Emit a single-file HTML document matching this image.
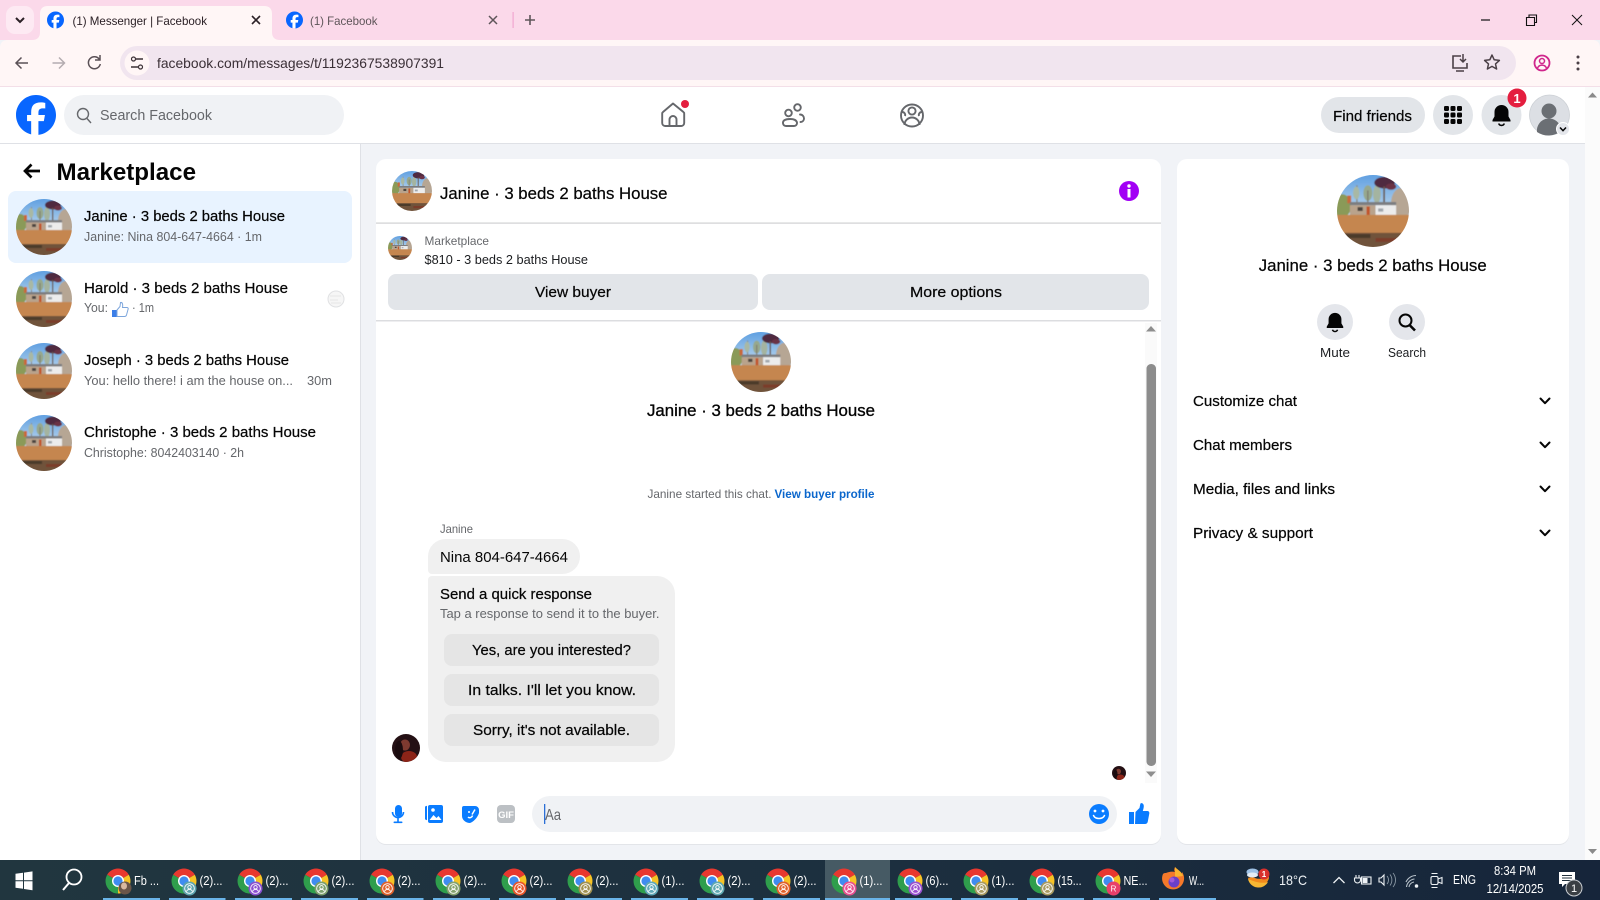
<!DOCTYPE html>
<html lang="en"><head><meta charset="utf-8"><title>Messenger | Facebook</title>
<style>
html,body{margin:0;padding:0;width:1600px;height:900px;overflow:hidden;background:#f1f3f7}
svg{display:block}
text{font-family:"Liberation Sans",sans-serif;fill:#050505;font-size:15px}
.m{stroke:#050505;stroke-width:.22}
.g{fill:#65676b}
.c{font-size:12px}
.s{font-size:13px}
.w{fill:#fff;font-size:13px}
.wt{fill:#eef2f5;font-size:13px}
</style></head><body>
<svg width="1600" height="900" viewBox="0 0 1600 900" xmlns="http://www.w3.org/2000/svg">
<defs>
<linearGradient id="tb" x1="0" x2="1" y1="0" y2="0"><stop offset="0" stop-color="#21363f"/><stop offset=".55" stop-color="#1c2f3f"/><stop offset="1" stop-color="#16253a"/></linearGradient>
<linearGradient id="sky" x1="0" x2="0" y1="0" y2="1"><stop offset="0" stop-color="#5a9ce0"/><stop offset="1" stop-color="#c4dcee"/></linearGradient>
<filter id="bl" x="-5%" y="-5%" width="110%" height="110%"><feGaussianBlur stdDeviation=".45"/></filter>
<clipPath id="cp"><circle cx="28" cy="28" r="28"/></clipPath>
<symbol id="house" viewBox="0 0 56 56"><g clip-path="url(#cp)"><g filter="url(#bl)">
<rect x="-2" y="-2" width="60" height="34" fill="url(#sky)"/>
<ellipse cx="4" cy="24" rx="7" ry="9" fill="#8a9a58"/><rect x="8" y="16" width="3" height="6" fill="#c8683a"/>
<rect x="15" y="8" width="1" height="14" fill="#8a8478"/><ellipse cx="15" cy="14" rx="2.500" ry="5" fill="#a8b8a4"/>
<ellipse cx="24" cy="14" rx="3.500" ry="6" fill="#96a88e"/><rect x="23.500" y="12" width="1" height="10" fill="#7d786c"/>
<ellipse cx="31" cy="15" rx="3" ry="7" fill="#a4b4a0"/>
<ellipse cx="37" cy="6" rx="8" ry="4.500" fill="#4f2c3f"/><ellipse cx="42" cy="9" rx="4" ry="2.500" fill="#6a3044"/><rect x="36" y="9" width="1.300" height="13" fill="#6a5a50"/>
<ellipse cx="50" cy="22" rx="8" ry="12" fill="#b6a694"/>
<rect x="10" y="21" width="36" height="2.500" fill="#7c7d80"/><rect x="10" y="23.500" width="20" height="8" fill="#b9a38c"/><rect x="30" y="23.500" width="16" height="8" fill="#ececec"/>
<rect x="16" y="25" width="4" height="3" fill="#4c4440"/><rect x="23" y="24.500" width="2.500" height="7" fill="#c2542a"/><rect x="32" y="26" width="4" height="2.500" fill="#a0a6ac"/>
<rect x="-2" y="31" width="60" height="15" fill="#c58650"/>
<rect x="-2" y="45" width="60" height="13" fill="#70533a"/><rect x="6" y="46" width="20" height="3" fill="#4b3a2c"/><rect x="30" y="49" width="20" height="3" fill="#7c3d2c"/>
</g></g></symbol>
<symbol id="fb" viewBox="0 0 36 36"><circle cx="18" cy="18" r="17" fill="#fff"/><path fill="#0866ff" d="M36 18C36 8.06 27.94 0 18 0S0 8.06 0 18c0 8.44 5.81 15.52 13.65 17.47V23.5H9.94V18h3.71v-2.37c0-6.13 2.77-8.96 8.79-8.96 1.14 0 3.11.22 3.91.45v4.98c-.42-.04-1.16-.07-2.07-.07-2.96 0-4.1 1.12-4.1 4.03V18h5.88l-1.01 5.5H20.18v12.37C29.1 34.79 36 27.2 36 18z"/></symbol>
<symbol id="bell" viewBox="0 0 24 24"><path fill="#050505" d="M12 2a7 7 0 0 0-7 7v4.500L3 17v1.500h18V17l-2-3.500V9a7 7 0 0 0-7-7z"/><path fill="none" stroke="#050505" stroke-width="1.600" d="M9.200 20.500a3 3 0 0 0 5.600 0"/></symbol>
<g id="cr"><path fill="#e8382f" d="M0 0L-10.800-6.250A12.500 12.500 0 0 1 10.800-6.250Z"/><path fill="#f7c325" d="M0 0L10.800-6.250A12.500 12.500 0 0 1 0 12.500Z"/><path fill="#2f9e4c" d="M0 0L0 12.500A12.500 12.500 0 0 1-10.800-6.250Z"/><circle r="6" fill="#fff"/><circle r="4.600" fill="#3f8cf0"/></g>
<g id="pp" fill="none" stroke="#fff" stroke-width=".9"><circle r="4.800"/><circle cy="-1.200" r="1.700"/><path d="M-3 3a3.200 3.200 0 0 1 6 0"/></g>
<g id="dn"><path d="M-4.500-2.500L0 2.200 4.500-2.500" fill="none" stroke="#050505" stroke-width="2" stroke-linecap="round" stroke-linejoin="round"/></g>
<clipPath id="wc"><circle cx="0" cy="0" r="14"/></clipPath>
<g id="wom"><circle r="14" fill="#241014"/><g clip-path="url(#wc)"><ellipse cx="-1" cy="-3" rx="5" ry="5.500" fill="#7d3a30"/><ellipse cx="3" cy="9" rx="8" ry="6" fill="#8c2418"/><ellipse cx="-7" cy="2" rx="4" ry="9" fill="#1a0b0e"/></g></g>
</defs>

<!-- browser chrome -->
<rect width="1600" height="40" fill="#fbd9ea"/>
<rect x="6" y="6" width="28" height="28" rx="9" fill="#fdeaf3"/>
<path d="M16 18l4 4 4-4" fill="none" stroke="#2b2026" stroke-width="2"/>
<path d="M32 40q8 0 8-8V14q0-8 8-8h216q8 0 8 8v18q0 8 8 8z" fill="#fff6f6"/>
<use href="#fb" x="47" y="11.500" width="17" height="17"/>
<text x="72.500" y="25" class="c" textLength="134.500" lengthAdjust="spacingAndGlyphs" style="fill:#2b2026">(1) Messenger | Facebook</text>
<path d="M252 16l8 8m0-8l-8 8" stroke="#2b2026" stroke-width="1.600"/>
<use href="#fb" x="286" y="11.500" width="17" height="17"/>
<text x="310" y="25" class="c g" textLength="67.500" lengthAdjust="spacingAndGlyphs" style="fill:#5e5559">(1) Facebook</text>
<path d="M489 16l8 8m0-8l-8 8" stroke="#5e5559" stroke-width="1.500"/>
<rect x="512.500" y="12" width="1.200" height="16" fill="#f2a6d0"/>
<path d="M530 15v10m-5-5h10" stroke="#5e5559" stroke-width="1.600"/>
<path d="M1481 20h9" stroke="#111" stroke-width="1.200"/>
<path d="M1526.500 17.500h8v8h-8z M1529 17.500v-2.500h7.500v7.500h-2" fill="none" stroke="#111" stroke-width="1.100"/>
<path d="M1572 15l10 10m0-10l-10 10" stroke="#111" stroke-width="1"/>
<path d="M0 87V48q0-8 8-8h1584q8 0 8 8v39z" fill="#fff6f6"/>
<rect y="86" width="1600" height="1.500" fill="#f3dfe8"/>
<path d="M28 63H16.500m5-5.500l-5.500 5.500 5.500 5.500" fill="none" stroke="#5a5056" stroke-width="1.500"/>
<path d="M52.500 63H64m-5-5.500l5.500 5.500-5.500 5.500" fill="none" stroke="#b4acb0" stroke-width="1.500"/>
<path d="M99.500 59.500a6 6 0 1 0 .8 4.500M100 55v5h-5" fill="none" stroke="#5a5056" stroke-width="1.500"/>
<rect x="120" y="46" width="1396" height="34" rx="17" fill="#f1e5ef"/>
<circle cx="137" cy="63" r="12.500" fill="#fff6f6"/>
<path d="M136 59h7M131 67h7" stroke="#3a3035" stroke-width="1.400"/><circle cx="133.500" cy="59" r="2" fill="none" stroke="#3a3035" stroke-width="1.200"/><circle cx="140.500" cy="67" r="2" fill="none" stroke="#3a3035" stroke-width="1.200"/>
<text x="157" y="68" textLength="287" lengthAdjust="spacingAndGlyphs" style="font-size:14px;fill:#3a2f36">facebook.com/messages/t/1192367538907391</text>
<path d="M1461 56h-8v12h14v-5M1456 71h8" fill="none" stroke="#4a3f46" stroke-width="1.600"/><path d="M1463 54v8m-3-3l3 3 3-3" fill="none" stroke="#4a3f46" stroke-width="1.500"/>
<path d="M1492 55l2.200 4.800 5.200.6-3.900 3.500 1.100 5.100-4.600-2.600-4.600 2.600 1.100-5.100-3.900-3.500 5.200-.6z" fill="none" stroke="#4a3f46" stroke-width="1.500" stroke-linejoin="round"/>
<circle cx="1542" cy="63" r="7.500" fill="none" stroke="#d0268c" stroke-width="1.800"/><circle cx="1542" cy="61" r="2.500" fill="none" stroke="#d0268c" stroke-width="1.500"/><path d="M1537.500 68a5 5 0 0 1 9 0" fill="none" stroke="#d0268c" stroke-width="1.500"/>
<circle cx="1578" cy="57" r="1.500" fill="#4a3f46"/><circle cx="1578" cy="63" r="1.500" fill="#4a3f46"/><circle cx="1578" cy="69" r="1.500" fill="#4a3f46"/>

<!-- page bg / scrollbar -->
<rect y="87" width="1600" height="773" fill="#f1f3f7"/>
<rect x="1585" y="87" width="15" height="773" fill="#fbfbfb"/>
<path d="M1592.500 92.500l4.500 5h-9z" fill="#8a8a8a"/><path d="M1592.500 854l4.500-5h-9z" fill="#8a8a8a"/>

<!-- fb header -->
<rect y="87" width="1585" height="56" fill="#fff"/>
<rect y="143" width="1585" height="1" fill="#dfe1e6"/>
<use href="#fb" x="16" y="95" width="40" height="40"/>
<rect x="64" y="95" width="280" height="40" rx="20" fill="#f0f2f5"/>
<circle cx="83" cy="114" r="5.500" fill="none" stroke="#65676b" stroke-width="1.400"/><path d="M87 118.500l4 4.500" stroke="#65676b" stroke-width="1.400"/>
<text x="100" y="120" class="g" textLength="112" lengthAdjust="spacingAndGlyphs">Search Facebook</text>
<path d="M673 103.500L663 112a2 2 0 0 0-.8 1.600v9.400a3 3 0 0 0 3 3h16a3 3 0 0 0 3-3v-9.400a2 2 0 0 0-.8-1.600zM669.500 126v-6.500a3.500 3.500 0 0 1 7 0v6.500" fill="none" stroke="#65676b" stroke-width="1.900" stroke-linejoin="round"/>
<circle cx="685" cy="104" r="4" fill="#e41e3f"/>
<g fill="none" stroke="#65676b" stroke-width="1.900" stroke-linecap="round"><circle cx="788.500" cy="113" r="3.300"/><circle cx="797.500" cy="107.500" r="3.300"/><path d="M786 126h8a3 3 0 0 0 3-3.500c-.5-2-2.500-3.500-7-3.500s-7 1.500-7 3.500a3 3 0 0 0 3 3.500zM800 114.500c2.500 0 4 2 4 4s-1.500 3.500-3.500 3.500"/></g>
<g fill="none" stroke="#65676b" stroke-width="1.900"><circle cx="912" cy="115.500" r="11"/><circle cx="912" cy="111" r="3.600"/><path d="M904.500 125a7.500 7.500 0 0 1 15 0M902 112a3 3 0 0 1 3 4M922 112a3 3 0 0 0-3 4"/></g>
<rect x="1321" y="97" width="104" height="36" rx="18" fill="#e2e5e9"/>
<text x="1333" y="121" class="m" textLength="79" lengthAdjust="spacingAndGlyphs">Find friends</text>
<circle cx="1453" cy="115" r="20" fill="#e2e5e9"/>
<g fill="#050505"><rect x="1444" y="106" width="5" height="5" rx="1.200"/><rect x="1450.500" y="106" width="5" height="5" rx="1.200"/><rect x="1457" y="106" width="5" height="5" rx="1.200"/><rect x="1444" y="112.500" width="5" height="5" rx="1.200"/><rect x="1450.500" y="112.500" width="5" height="5" rx="1.200"/><rect x="1457" y="112.500" width="5" height="5" rx="1.200"/><rect x="1444" y="119" width="5" height="5" rx="1.200"/><rect x="1450.500" y="119" width="5" height="5" rx="1.200"/><rect x="1457" y="119" width="5" height="5" rx="1.200"/></g>
<circle cx="1501.500" cy="115" r="20" fill="#e2e5e9"/>
<use href="#bell" x="1489.500" y="103" width="24" height="24"/>
<circle cx="1517" cy="98" r="9.500" fill="#e41e3f"/><text x="1517" y="103" text-anchor="middle" style="font-size:13px;font-weight:bold;fill:#fff">1</text>
<circle cx="1549.500" cy="115" r="20" fill="#dcdfe4" stroke="#ccd0d5" stroke-width=".8"/>
<circle cx="1549" cy="111" r="7.500" fill="#6b6f74"/><path d="M1537 132a12 12 0 0 1 24-3v2a20 20 0 0 1-24 1z" fill="#6b6f74"/>
<circle cx="1563" cy="129" r="6.500" fill="#e4e6eb" stroke="#fff"/><path d="M1560 127.500l3 3.200 3-3.200" fill="none" stroke="#050505" stroke-width="1.500"/>

<!-- sidebar -->
<rect y="144" width="360" height="716" fill="#fff"/>
<rect x="360" y="144" width="1" height="716" fill="#dfe1e6"/>
<path d="M40 171H25m6.500-6.500L25 171l6.500 6.500" fill="none" stroke="#050505" stroke-width="2.700"/>
<text x="56.500" y="180" textLength="139.500" lengthAdjust="spacingAndGlyphs" style="font-size:24px;font-weight:bold">Marketplace</text>
<rect x="8" y="191" width="344" height="72" rx="8" fill="#e8f3ff"/>
<use href="#house" x="16" y="199" width="56" height="56"/>
<text x="84" y="221" class="m" textLength="201" lengthAdjust="spacingAndGlyphs">Janine · 3 beds 2 baths House</text>
<text x="84" y="241" class="s g" textLength="178" lengthAdjust="spacingAndGlyphs">Janine: Nina 804-647-4664 · 1m</text>
<use href="#house" x="16" y="271" width="56" height="56"/>
<text x="84" y="293" class="m" textLength="204" lengthAdjust="spacingAndGlyphs">Harold · 3 beds 2 baths House</text>
<text x="84" y="312" class="s g" textLength="24" lengthAdjust="spacingAndGlyphs">You:</text>
<path d="M112 310h5v7h-5z" fill="#3c7fe8"/><path d="M117 310l3-3.500 .5-4c2-.5 2.500 2 2 5h4.500c1 0 1.500 1 1 2l-1.500 5.500c-.3 1-1 1.500-2 1.500h-7.500z" fill="#fff" stroke="#7da6dc" stroke-width="1"/>
<text x="132" y="312" class="s g" textLength="22" lengthAdjust="spacingAndGlyphs">· 1m</text>
<circle cx="336" cy="299" r="8" fill="#f6f6f6" stroke="#e0e1e3"/><path d="M330 296h11M330 300h8M331 303h10" stroke="#dfe0e2" stroke-width=".8"/>
<use href="#house" x="16" y="343" width="56" height="56"/>
<text x="84" y="365" class="m" textLength="205" lengthAdjust="spacingAndGlyphs">Joseph · 3 beds 2 baths House</text>
<text x="84" y="385" class="s g" textLength="209" lengthAdjust="spacingAndGlyphs">You: hello there! i am the house on...</text>
<text x="307" y="385" class="s g" textLength="25" lengthAdjust="spacingAndGlyphs">30m</text>
<use href="#house" x="16" y="415" width="56" height="56"/>
<text x="84" y="437" class="m" textLength="232" lengthAdjust="spacingAndGlyphs">Christophe · 3 beds 2 baths House</text>
<text x="84" y="457" class="s g" textLength="160" lengthAdjust="spacingAndGlyphs">Christophe: 8042403140 · 2h</text>

<!-- chat card -->
<rect x="376" y="160" width="785" height="685" rx="10" fill="#e3e5e9"/>
<rect x="376" y="159" width="785" height="685" rx="10" fill="#fff"/>
<use href="#house" x="392" y="171" width="40" height="40"/>
<text x="440" y="199" class="m" textLength="227.500" lengthAdjust="spacingAndGlyphs" style="font-size:17px">Janine · 3 beds 2 baths House</text>
<circle cx="1129" cy="191" r="10" fill="#a200f5"/><circle cx="1129" cy="186" r="1.700" fill="#fff"/><rect x="1127.500" y="189" width="3" height="8.500" fill="#fff"/>
<rect x="376" y="222.500" width="785" height="1.200" fill="#cfd0d2"/>
<use href="#house" x="388" y="236" width="24" height="24"/>
<text x="424.500" y="245" class="c g" textLength="64.500" lengthAdjust="spacingAndGlyphs">Marketplace</text>
<text x="424.500" y="264" class="s" textLength="163.500" lengthAdjust="spacingAndGlyphs" style="fill:#1c1e21">$810 - 3 beds 2 baths House</text>
<rect x="388" y="274" width="370" height="36" rx="8" fill="#e2e5e9"/>
<text x="535" y="297" class="m" textLength="76" lengthAdjust="spacingAndGlyphs">View buyer</text>
<rect x="762" y="274" width="387" height="36" rx="8" fill="#e2e5e9"/>
<text x="910" y="297" class="m" textLength="92" lengthAdjust="spacingAndGlyphs">More options</text>
<rect x="376" y="320" width="785" height="1.500" fill="#dcdde0"/>
<rect x="1145" y="323" width="12" height="460" fill="#fafafa"/>
<path d="M1151 326l5 5.500h-10z" fill="#8e8e8e"/><path d="M1151 777l5-5.500h-10z" fill="#8e8e8e"/>
<rect x="1146.500" y="364" width="9.500" height="402" rx="4.500" fill="#8c8c8c"/>
<use href="#house" x="731" y="332" width="60" height="60"/>
<text x="647" y="416" class="m" textLength="228" lengthAdjust="spacingAndGlyphs" style="font-size:17px;stroke-width:.35">Janine · 3 beds 2 baths House</text>
<text x="647.500" y="498" class="c g" textLength="124" lengthAdjust="spacingAndGlyphs">Janine started this chat.</text>
<text x="774.500" y="498" textLength="100" lengthAdjust="spacingAndGlyphs" style="font-size:12px;font-weight:bold;fill:#0a66cc">View buyer profile</text>
<text x="440" y="533" class="c g" textLength="33" lengthAdjust="spacingAndGlyphs">Janine</text>
<path d="M432 574a4 4 0 0 1-4-4V556.500A17.500 17.500 0 0 1 445.500 539H562.500a17.500 17.500 0 0 1 0 35z" fill="#f0f0f0"/>
<text x="440" y="562" textLength="128" lengthAdjust="spacingAndGlyphs">Nina 804-647-4664</text>
<path d="M432 576H657a18 18 0 0 1 18 18V744a18 18 0 0 1-18 18H446a18 18 0 0 1-18-18V580a4 4 0 0 1 4-4z" fill="#f0f0f0"/>
<text x="440" y="599" class="m" textLength="152" lengthAdjust="spacingAndGlyphs">Send a quick response</text>
<text x="440" y="618" class="s g" textLength="219.500" lengthAdjust="spacingAndGlyphs">Tap a response to send it to the buyer.</text>
<rect x="444" y="634" width="215" height="32" rx="8" fill="#e5e5e5"/>
<text x="472" y="655" class="m" textLength="159" lengthAdjust="spacingAndGlyphs">Yes, are you interested?</text>
<rect x="444" y="674" width="215" height="32" rx="8" fill="#e5e5e5"/>
<text x="468" y="695" class="m" textLength="168" lengthAdjust="spacingAndGlyphs">In talks. I'll let you know.</text>
<rect x="444" y="714" width="215" height="32" rx="8" fill="#e5e5e5"/>
<text x="473" y="735" class="m" textLength="157" lengthAdjust="spacingAndGlyphs">Sorry, it's not available.</text>
<use href="#wom" x="406" y="748"/>
<g transform="translate(1119,773) scale(.5)"><use href="#wom"/></g>
<!-- composer -->
<g fill="#0a7cff"><rect x="395" y="805" width="7" height="12" rx="3.500"/><path d="M392.500 812a5.500 5.500 0 0 0 11 0" fill="none" stroke="#0a7cff" stroke-width="1.600"/><rect x="397.200" y="818" width="1.600" height="4"/><rect x="393.500" y="821.500" width="9" height="1.600" rx=".8"/>
<path d="M425 806.500l2-.8v14.500l-2-.8z"/><rect x="428" y="805" width="15" height="18" rx="2"/></g>
<circle cx="433" cy="810" r="1.800" fill="#fff"/><path d="M429.500 820l4-5 3 3 2-2 3 4z" fill="#fff"/>
<path d="M464 806h11a4 4 0 0 1 4 4v3c-1.500 5-6 9-9 10-4 0-8-3-8-7v-8a2 2 0 0 1 2-2z" fill="#0a7cff"/><path d="M469 811v2M475 809.500l-3 5M468 817c1.500 1.500 4 .5 4.500-1.500" stroke="#fff" stroke-width="1.500" fill="none"/>
<rect x="497" y="805" width="18" height="18" rx="4" fill="#bcc0c4"/><text x="506" y="818" text-anchor="middle" style="font-size:9.500px;font-weight:bold;fill:#fff">GIF</text>
<rect x="532" y="796" width="585" height="36" rx="18" fill="#f0f2f5"/>
<rect x="544" y="804" width="1.300" height="20" fill="#2b6fd6"/>
<text x="545" y="820" class="g" textLength="16" lengthAdjust="spacingAndGlyphs" style="font-size:16px">Aa</text>
<circle cx="1099" cy="814" r="10" fill="#0a7cff"/><circle cx="1095" cy="811" r="1.400" fill="#fff"/><circle cx="1103" cy="811" r="1.400" fill="#fff"/><path d="M1093.500 815.500c2 4 9 4 11 0" fill="none" stroke="#fff" stroke-width="1.500" stroke-linecap="round"/>
<path d="M1129 812h5v12h-5zM1135.500 812l4-4 .8-4c.3-1.500 3.500-1 3.500 2 0 1.800-.6 3.500-1 5h4.500c1.600 0 2.200 1.200 2 2.500l-1.500 8c-.3 1.600-1.200 2.500-3 2.500h-9.800z" fill="#0a7cff"/>

<!-- right card -->
<rect x="1177" y="160" width="392" height="685" rx="10" fill="#e3e5e9"/>
<rect x="1177" y="159" width="392" height="685" rx="10" fill="#fff"/>
<use href="#house" x="1337" y="175" width="72" height="72"/>
<text x="1258.700" y="271" class="m" textLength="228" lengthAdjust="spacingAndGlyphs" style="font-size:17px">Janine · 3 beds 2 baths House</text>
<circle cx="1335" cy="322" r="18" fill="#e4e6eb"/><use href="#bell" x="1324" y="311" width="22" height="22"/>
<circle cx="1407" cy="322" r="18" fill="#e4e6eb"/><circle cx="1405.500" cy="320.500" r="6" fill="none" stroke="#050505" stroke-width="2"/><path d="M1410 325.500l5 5" stroke="#050505" stroke-width="2.600"/>
<text x="1320" y="357" class="s" textLength="30" lengthAdjust="spacingAndGlyphs" style="fill:#1c1e21">Mute</text>
<text x="1388" y="357" class="s" textLength="38" lengthAdjust="spacingAndGlyphs" style="fill:#1c1e21">Search</text>
<text x="1193" y="406" class="m" textLength="104" lengthAdjust="spacingAndGlyphs">Customize chat</text>
<text x="1193" y="450" class="m" textLength="99" lengthAdjust="spacingAndGlyphs">Chat members</text>
<text x="1193" y="494" class="m" textLength="142" lengthAdjust="spacingAndGlyphs">Media, files and links</text>
<text x="1193" y="538" class="m" textLength="120" lengthAdjust="spacingAndGlyphs">Privacy &amp; support</text>
<use href="#dn" x="1545" y="401"/><use href="#dn" x="1545" y="445"/><use href="#dn" x="1545" y="489"/><use href="#dn" x="1545" y="533"/>

<!-- taskbar -->
<rect y="860" width="1600" height="40" fill="url(#tb)"/>
<rect x="825" y="860" width="65" height="40" fill="#465a64"/>
<g fill="#fff"><path d="M15.500 873.800l7.500-1v7.500h-7.500zM24 872.600l8.500-1.200v8.900H24zM15.500 881.300H23v7.500l-7.500-1zM24 881.300h8.500v8.900l-8.500-1.200z"/></g>
<circle cx="74" cy="877" r="7.500" fill="none" stroke="#fff" stroke-width="1.800"/><path d="M69 883l-6 7" stroke="#fff" stroke-width="2"/>
<g fill="#6ab4e8"><rect x="103" y="898" width="57" height="2"/><rect x="169" y="898" width="56.500" height="2"/><rect x="235" y="898" width="57" height="2"/><rect x="301" y="898" width="57" height="2"/><rect x="367" y="898" width="56.500" height="2"/><rect x="433" y="898" width="57" height="2"/><rect x="499" y="898" width="57" height="2"/><rect x="565" y="898" width="57" height="2"/><rect x="631" y="898" width="57" height="2"/><rect x="697" y="898" width="56.500" height="2"/><rect x="763" y="898" width="57" height="2"/><rect x="825" y="898" width="65" height="2"/><rect x="895" y="898" width="57" height="2"/><rect x="961" y="898" width="57" height="2"/><rect x="1027" y="898" width="57" height="2"/><rect x="1093" y="898" width="57" height="2"/><rect x="1159" y="898" width="57" height="2"/></g>

<use href="#cr" x="118" y="881"/><circle cx="125" cy="888" r="6.500" fill="#6b5548"/><ellipse cx="124" cy="886" rx="3" ry="3.500" fill="#d8b8a0"/>
<text x="134" y="885" class="w" textLength="25" lengthAdjust="spacingAndGlyphs">Fb ...</text>
<g transform="translate(184,881)"><use href="#cr"/><g transform="translate(5.500,7.500)"><circle r="7" fill="#5ea4ae"/><use href="#pp"/></g></g><text x="199.500" y="885" class="w" textLength="23" lengthAdjust="spacingAndGlyphs">(2)...</text>
<g transform="translate(250,881)"><use href="#cr"/><g transform="translate(5.500,7.500)"><circle r="7" fill="#8a4fd0"/><use href="#pp"/></g></g><text x="265.500" y="885" class="w" textLength="23" lengthAdjust="spacingAndGlyphs">(2)...</text>
<g transform="translate(316,881)"><use href="#cr"/><g transform="translate(5.500,7.500)"><circle r="7" fill="#7c9f6c"/><use href="#pp"/></g></g><text x="331.500" y="885" class="w" textLength="23" lengthAdjust="spacingAndGlyphs">(2)...</text>
<g transform="translate(382,881)"><use href="#cr"/><g transform="translate(5.500,7.500)"><circle r="7" fill="#e0602a"/><use href="#pp"/></g></g><text x="397.500" y="885" class="w" textLength="23" lengthAdjust="spacingAndGlyphs">(2)...</text>
<g transform="translate(448,881)"><use href="#cr"/><g transform="translate(5.500,7.500)"><circle r="7" fill="#84a26e"/><use href="#pp"/></g></g><text x="463.500" y="885" class="w" textLength="23" lengthAdjust="spacingAndGlyphs">(2)...</text>
<g transform="translate(514,881)"><use href="#cr"/><g transform="translate(5.500,7.500)"><circle r="7" fill="#e8562a"/><use href="#pp"/></g></g><text x="529.500" y="885" class="w" textLength="23" lengthAdjust="spacingAndGlyphs">(2)...</text>
<g transform="translate(580,881)"><use href="#cr"/><g transform="translate(5.500,7.500)"><circle r="7" fill="#a09050"/><use href="#pp"/></g></g><text x="595.500" y="885" class="w" textLength="23" lengthAdjust="spacingAndGlyphs">(2)...</text>
<g transform="translate(646,881)"><use href="#cr"/><g transform="translate(5.500,7.500)"><circle r="7" fill="#5fa8b8"/><use href="#pp"/></g></g><text x="661.500" y="885" class="w" textLength="23" lengthAdjust="spacingAndGlyphs">(1)...</text>
<g transform="translate(712,881)"><use href="#cr"/><g transform="translate(5.500,7.500)"><circle r="7" fill="#5fa8b0"/><use href="#pp"/></g></g><text x="727.500" y="885" class="w" textLength="23" lengthAdjust="spacingAndGlyphs">(2)...</text>
<g transform="translate(778,881)"><use href="#cr"/><g transform="translate(5.500,7.500)"><circle r="7" fill="#e0602a"/><use href="#pp"/></g></g><text x="793.500" y="885" class="w" textLength="23" lengthAdjust="spacingAndGlyphs">(2)...</text>
<g transform="translate(844,881)"><use href="#cr"/><g transform="translate(5.500,7.500)"><circle r="7" fill="#e84f90"/><use href="#pp"/></g></g><text x="859.500" y="885" class="w" textLength="23" lengthAdjust="spacingAndGlyphs">(1)...</text>
<g transform="translate(910,881)"><use href="#cr"/><g transform="translate(5.500,7.500)"><circle r="7" fill="#9a50d0"/><use href="#pp"/></g></g><text x="925.500" y="885" class="w" textLength="23" lengthAdjust="spacingAndGlyphs">(6)...</text>
<g transform="translate(976,881)"><use href="#cr"/><g transform="translate(5.500,7.500)"><circle r="7" fill="#a89a60"/><use href="#pp"/></g></g><text x="991.500" y="885" class="w" textLength="23" lengthAdjust="spacingAndGlyphs">(1)...</text>
<g transform="translate(1042,881)"><use href="#cr"/><g transform="translate(5.500,7.500)"><circle r="7" fill="#a89a60"/><use href="#pp"/></g></g><text x="1057.500" y="885" class="w" textLength="24" lengthAdjust="spacingAndGlyphs">(15...</text>
<g transform="translate(1108,881)"><use href="#cr"/><g transform="translate(5.500,7.500)"><circle r="7" fill="#e8406a"/><text y="3" text-anchor="middle" style="font-size:8px;fill:#fff">R</text></g></g><text x="1123.500" y="885" class="w" textLength="24" lengthAdjust="spacingAndGlyphs">NE...</text>
<path d="M1163 874a11 11 0 1 0 19-2c0 2-1 3-2 3-1-4-4-6-5-8-1 2-1 4 0 5-3-1-7 0-9 1-1 0-2 0-3 1z" fill="#f5792a"/><path d="M1175 867c3 3 7 5 8 9l-8 1z" fill="#fbb32f"/><circle cx="1174" cy="882" r="5.500" fill="#6a3fc8"/><circle cx="1172" cy="880" r="2.500" fill="#a05ad8"/>
<text x="1189" y="885" class="w" textLength="15" lengthAdjust="spacingAndGlyphs">W...</text>

<path d="M1248 878a10.800 10.800 0 0 0 21 0c0-2-1-4-2-4-1 4-7 6-12 4-2-1-5-1-7 0z" fill="#f28a1c"/><path d="M1248 879a10.800 10.800 0 0 0 20 3c-6 2-13 0-20-3z" fill="#f7b733"/>
<ellipse cx="1252.500" cy="872" rx="6" ry="3.500" fill="#9fc2e6"/><ellipse cx="1252.500" cy="875" rx="5.500" ry="2.500" fill="#e4edf5"/>
<circle cx="1264" cy="874" r="5.500" fill="#d8302c"/><text x="1264" y="877" text-anchor="middle" style="font-size:8px;font-weight:bold;fill:#fff">1</text>
<text x="1279" y="885" class="wt" textLength="28" lengthAdjust="spacingAndGlyphs" style="font-size:14px">18°C</text>
<path d="M1333.500 883l5.500-5.500 5.500 5.500" fill="none" stroke="#eef2f5" stroke-width="1.300"/>
<g fill="none" stroke="#eef2f5" stroke-width="1.100"><rect x="1361.500" y="877" width="9.500" height="7"/><rect x="1362.500" y="878" width="5" height="5" fill="#eef2f5" stroke="none"/><path d="M1356 875v3m3-3v3m-4.500 0h6v2a3 3 0 0 1-6 0z"/>
<path d="M1379 878h2l3-3v10l-3-3h-2z"/><path d="M1387 876a6 6 0 0 1 0 8M1390 874.500a9 9 0 0 1 0 11M1393 873a11 11 0 0 1 0 14" stroke="#8a98a4" stroke-width=".9"/>
<path d="M1409 887a6 6 0 0 1 5-5M1406.500 887a9 9 0 0 1 8-8M1406 882a11 11 0 0 1 10-6.500" stroke="#b8c2ca"/><circle cx="1416.500" cy="886" r="1.200" fill="#eef2f5"/>
<rect x="1431" y="876.500" width="7" height="8" rx="1.500"/><path d="M1438 879l4-1.500v6l-4-1.500M1431.500 873.500h6M1431.500 887.500h6"/></g>
<text x="1453" y="884" class="w" textLength="23" lengthAdjust="spacingAndGlyphs">ENG</text>
<text x="1494" y="875" class="w" textLength="42" lengthAdjust="spacingAndGlyphs">8:34 PM</text>
<text x="1486.500" y="893" class="w" textLength="57" lengthAdjust="spacingAndGlyphs">12/14/2025</text>
<path d="M1559 872h16v12h-10l-3 3v-3h-3z" fill="#fff"/><path d="M1562 875.500h10M1562 878h10M1562 880.500h10" stroke="#20303c"/>
<circle cx="1574" cy="888" r="8" fill="#3a3f44" stroke="#c8ccd0"/><text x="1574" y="892" text-anchor="middle" style="font-size:11px;fill:#fff">1</text>
</svg>
</body></html>
